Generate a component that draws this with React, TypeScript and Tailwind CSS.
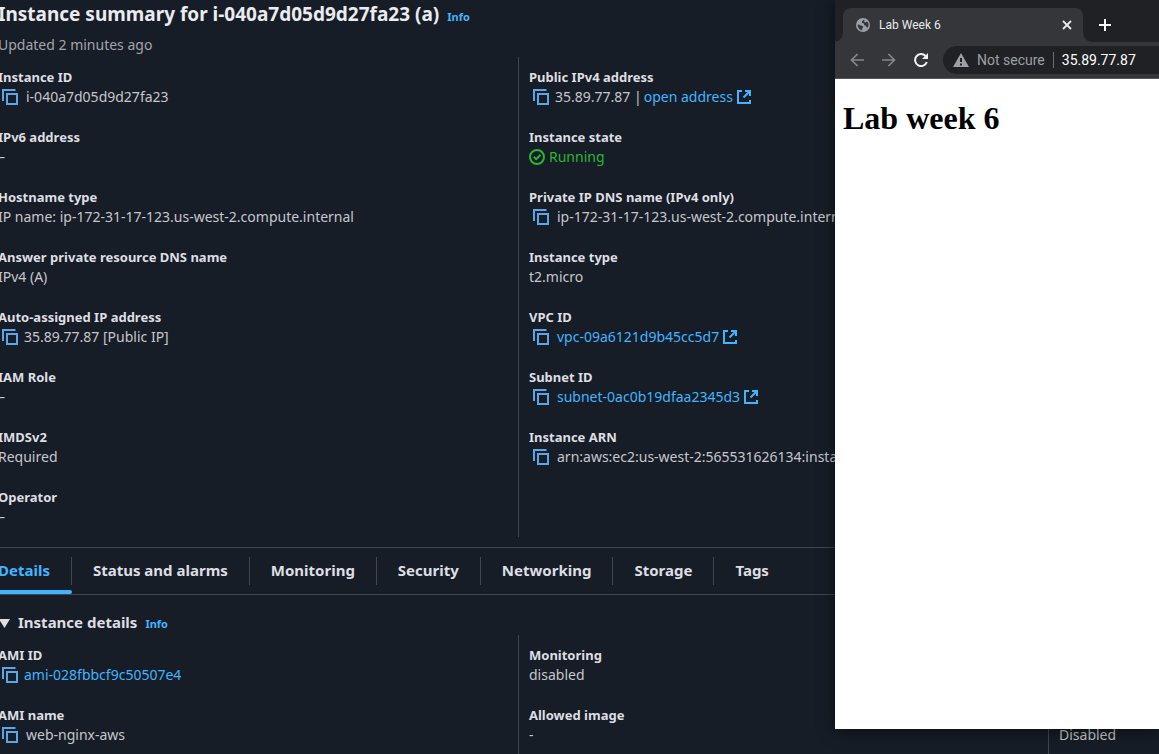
import type { ReactNode } from "react";

function CopyIcon() {
  return (
    <svg width="16" height="16" viewBox="0 0 16 16" fill="none" stroke="#5ba6e6" strokeWidth="2" aria-hidden="true">
      <path d="M1 12V1h12.5" />
      <rect x="5" y="5" width="10" height="10" />
    </svg>
  );
}

function ExternalIcon() {
  return (
    <svg width="14" height="14" viewBox="0 0 14 14" fill="none" stroke="#42b4ff" strokeWidth="2" aria-hidden="true">
      <path d="M5 1H1v12h12v-3" />
      <path d="M8 1h5v5M13 1 6.5 7.5" />
    </svg>
  );
}

function CheckIcon() {
  return (
    <svg width="16" height="16" viewBox="0 0 16 16" fill="none" stroke="#2bb534" strokeWidth="2" aria-hidden="true">
      <circle cx="8" cy="8" r="7" />
      <path d="m4.800 7.800 2.400 2.400L11.400 6" />
    </svg>
  );
}

function Field({ label, children }: { label: string; children: ReactNode }) {
  return (
    <div>
      <dt className="text-[13px] leading-5 font-bold whitespace-nowrap text-[#dedee3]">{label}</dt>
      <dd className="flex items-center whitespace-nowrap">{children}</dd>
    </div>
  );
}

function Copy({ name }: { name: string }) {
  return (
    <button type="button" aria-label={`Copy ${name}`} className="mr-1.5 ml-1 shrink-0">
      <CopyIcon />
    </button>
  );
}

function ExternalLink({ children }: { children: ReactNode }) {
  return (
    <a href="#" className="flex items-center gap-1 text-[#42b4ff]">
      {children}
      <ExternalIcon />
    </a>
  );
}

const columns = "grid grid-cols-[minmax(0,520fr)_minmax(0,530fr)_minmax(0,111fr)]";
const first = "flex flex-col gap-5 py-[10px]";
const next = "flex flex-col gap-5 overflow-hidden border-l border-[#424650] py-[10px] pl-[10px]";
const tabs = ["Details", "Status and alarms", "Monitoring", "Security", "Networking", "Storage", "Tags"];

function Console() {
  return (
    <main className="-ml-[2px] flex min-h-screen flex-col">
      <header className="pt-[2px]">
        <div className="flex items-baseline gap-2">
          <h1 className="text-[19px] leading-6 font-bold text-[#ebebf0]">Instance summary for i-040a7d05d9d27fa23 (a)</h1>
          <a href="#" className="text-[11px] leading-4 font-bold text-[#42b4ff]">Info</a>
        </div>
        <p className="mt-[9px] mb-[2px] text-[#a4a4ad]">Updated 2 minutes ago</p>
      </header>

      <section className={columns}>
        <dl className={first}>
          <Field label="Instance ID"><Copy name="instance ID" /><span className="ml-0.5">i-040a7d05d9d27fa23</span></Field>
          <Field label="IPv6 address">–</Field>
          <Field label="Hostname type">IP name: ip-172-31-17-123.us-west-2.compute.internal</Field>
          <Field label="Answer private resource DNS name">IPv4 (A)</Field>
          <Field label="Auto-assigned IP address"><Copy name="IP address" />35.89.77.87 [Public IP]</Field>
          <Field label="IAM Role">–</Field>
          <Field label="IMDSv2">Required</Field>
          <Field label="Operator">–</Field>
        </dl>
        <dl className={next}>
          <Field label="Public IPv4 address">
            <Copy name="public IPv4 address" />
            <span className="mr-0.5">35.89.77.87 |</span>
            <ExternalLink>open address</ExternalLink>
          </Field>
          <Field label="Instance state">
            <span className="flex items-center gap-1 text-[#2bb534]"><CheckIcon />Running</span>
          </Field>
          <Field label="Private IP DNS name (IPv4 only)"><Copy name="DNS name" /><span className="ml-0.5">ip-172-31-17-123.us-west-2.compute.internal</span></Field>
          <Field label="Instance type">t2.micro</Field>
          <Field label="VPC ID"><Copy name="VPC ID" /><span className="ml-0.5"><ExternalLink>vpc-09a6121d9b45cc5d7</ExternalLink></span></Field>
          <Field label="Subnet ID"><Copy name="subnet ID" /><span className="ml-0.5"><ExternalLink>subnet-0ac0b19dfaa2345d3</ExternalLink></span></Field>
          <Field label="Instance ARN"><Copy name="instance ARN" /><span className="ml-0.5">arn:aws:ec2:us-west-2:565531626134:instance</span></Field>
        </dl>
      </section>

      <nav role="tablist" className="mt-[10px] flex h-12 border-y border-[#424650]">
        {tabs.map((tab, i) => (
          <button
            key={tab}
            type="button"
            role="tab"
            aria-selected={i === 0}
            className={
              i === 0
                ? "relative flex items-center text-[15px] font-bold text-[#42b4ff]"
                : "flex items-center text-[15px] font-bold text-[#dedee3]"
            }
          >
            <span className={i === 0 ? "pr-[21px]" : "px-[21px]"}>{tab}</span>
            {i < tabs.length - 1 && <span className="h-7 w-px bg-[#424650]" />}
            {i === 0 && <span className="absolute right-0 bottom-0 left-0 h-1 rounded-r-sm bg-[#42b4ff]" />}
          </button>
        ))}
      </nav>

      <section className="flex grow flex-col pt-[15px]">
        <div className="mb-px flex items-baseline">
          <svg width="12" height="9" viewBox="0 0 12 9" className="mr-2" aria-hidden="true">
            <path d="M1 0h11L6.500 9z" fill="#dedee3" />
          </svg>
          <h2 className="text-[15px] leading-6 font-bold text-[#dedee3]">Instance details</h2>
          <a href="#" className="ml-2 text-[11px] leading-4 font-bold text-[#42b4ff]">Info</a>
        </div>
        <div className={`${columns} grow`}>
          <dl className={first}>
            <Field label="AMI ID"><Copy name="AMI ID" /><a href="#" className="text-[#42b4ff]">ami-028fbbcf9c50507e4</a></Field>
            <Field label="AMI name"><Copy name="AMI name" /><span className="ml-0.5">web-nginx-aws</span></Field>
          </dl>
          <dl className={next}>
            <Field label="Monitoring">disabled</Field>
            <Field label="Allowed image">-</Field>
          </dl>
          <div className="flex items-end border-l border-[#424650] pb-[10px] pl-[10px]">Disabled</div>
        </div>
      </section>
    </main>
  );
}

function BrowserWindow() {
  return (
    <aside className="absolute top-0 right-0 bottom-[26px] flex w-[324px] flex-col bg-white shadow-[0_2px_14px_rgba(0,0,0,0.55)]">
      <div className="flex h-[42px] items-end bg-[#202124] font-['Roboto',sans-serif] text-xs text-[#e8eaed]">
        <span className="size-2 bg-[radial-gradient(circle_at_0_0,transparent_7px,#35363a_8px)]" />
        <div className="flex h-[34px] w-60 items-center rounded-t-lg bg-[#35363a] pr-[11px] pl-[13px]">
          <svg width="14" height="14" viewBox="0 0 14 14" aria-hidden="true">
            <circle cx="7" cy="7" r="7" fill="#9aa0a6" />
            <path d="M1.600 6.200 5 7.600q2 .2 2.300 1.300L6.200 10.200V12.400Q2 11.800 1.600 6.200zM8.200 1.600 6 3.300v1.600l2 .7v1.500l1.800.6.7 1.500 1.400.4Q13.500 6 11.200 3.500L9.600 4.600 8.400 3.900z" fill="#35363a" />
          </svg>
          <span className="ml-[9px] grow">Lab Week 6</span>
          <button type="button" aria-label="Close tab">
            <svg width="10" height="10" viewBox="0 0 10 10" stroke="#e8eaed" strokeWidth="1.800" aria-hidden="true"><path d="m1 1 8 8M9 1 1 9" /></svg>
          </button>
        </div>
        <span className="size-2 bg-[radial-gradient(circle_at_100%_0,transparent_7px,#35363a_8px)]" />
        <button type="button" aria-label="New tab" className="mb-[11px] ml-2">
          <svg width="12" height="12" viewBox="0 0 12 12" stroke="#fff" strokeWidth="2" aria-hidden="true"><path d="M6 0v12M0 6h12" /></svg>
        </button>
      </div>
      <div className="flex h-[37px] items-center border-b border-[#55575b] bg-[#35363a] pl-[15px] font-['Roboto',sans-serif] text-sm">
        <button type="button" aria-label="Back">
          <svg width="14" height="14" viewBox="0 0 14 14" fill="none" stroke="#85878b" strokeWidth="1.700" aria-hidden="true"><path d="M14 7H1.500M7.500 1l-6 6 6 6" /></svg>
        </button>
        <button type="button" aria-label="Forward" className="ml-[18px]">
          <svg width="14" height="14" viewBox="0 0 14 14" fill="none" stroke="#85878b" strokeWidth="1.700" aria-hidden="true"><path d="M0 7h12.500M6.500 1l6 6-6 6" /></svg>
        </button>
        <button type="button" aria-label="Reload" className="ml-[18px]">
          <svg width="14" height="14" viewBox="0 0 14 14" fill="none" stroke="#f1f3f4" strokeWidth="2" aria-hidden="true"><path d="M12.800 9A6 6 0 1 1 11.500 3" /><path d="M14 0v6H8z" fill="#f1f3f4" stroke="none" /></svg>
        </button>
        <div className="ml-[15px] flex h-7 grow items-center rounded-l-full bg-[#202124] pl-[10px]">
          <svg width="16" height="14" viewBox="0 0 16 14" aria-hidden="true"><path d="M8 0l8 14H0z" fill="#9aa0a6" /><path d="M7 5h2v4H7zM7 10.500h2v2H7z" fill="#202124" /></svg>
          <span className="ml-2 text-[#9aa0a6]">Not secure</span>
          <span className="mx-2 h-4 w-px bg-[#6b6e73]" />
          <input aria-label="Address" defaultValue="35.89.77.87" className="w-0 grow bg-transparent text-white outline-none" />
        </div>
      </div>
      <h1 className="px-2 pt-[21px] font-['Liberation_Serif',serif] text-[32px] leading-[37px] font-bold text-black">Lab week 6</h1>
    </aside>
  );
}

export default function App() {
  return (
    <div className="relative min-h-screen overflow-hidden bg-[#161d26] font-['Noto_Sans',sans-serif] text-sm text-[#c6c6cd]">
      <Console />
      <BrowserWindow />
    </div>
  );
}
